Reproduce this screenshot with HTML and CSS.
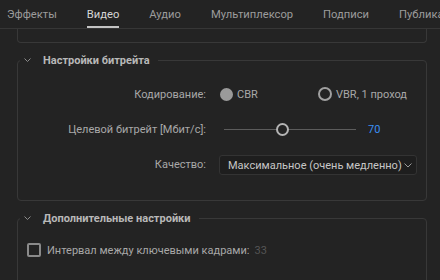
FILE: index.html
```html
<!DOCTYPE html>
<html lang="ru">
<head>
<meta charset="UTF-8">
<title>Экспорт — Видео</title>
<link rel="stylesheet" href="styles.css">
</head>
<body>

<!-- Tabs -->
<div class="tabs">
    <span class="tab">Эффекты</span>
    <span class="tab active">Видео</span>
    <span class="tab">Аудио</span>
    <span class="tab">Мультиплексор</span>
    <span class="tab">Подписи</span>
    <span class="tab">Публикация</span>
</div>

<div class="panel">
    <div class="group group-cut"></div>

    <!-- Bitrate settings -->
    <fieldset class="group">
        <legend>
            <svg class="chevron" width="7" height="4" viewBox="0 0 7 4"><path d="M0.5 0.5 L3.5 3.5 L6.5 0.5" fill="none" stroke="#8c8c8c" stroke-width="1"/></svg>
            Настройки битрейта
        </legend>
        <div class="form-grid">
            <label>Кодирование:</label>
            <div class="radios">
                <span class="radio-option"><span class="radio checked"></span>CBR</span>
                <span class="radio-option"><span class="radio"></span>VBR, 1 проход</span>
            </div>

            <label>Целевой битрейт [Мбит/с]:</label>
            <div class="slider-row">
                <div class="slider">
                    <span class="thumb"></span>
                </div>
                <span class="value">70</span>
            </div>

            <label>Качество:</label>
            <div class="select">
                <span>Максимальное (очень медленно)</span>
                <svg width="8" height="5" viewBox="0 0 8 5"><path d="M0.5 0.5 L4 4 L7.5 0.5" fill="none" stroke="#9a9a9a" stroke-width="1"/></svg>
            </div>
        </div>
    </fieldset>

    <!-- Advanced settings -->
    <fieldset class="group group-last">
        <legend>
            <svg class="chevron" width="7" height="4" viewBox="0 0 7 4"><path d="M0.5 0.5 L3.5 3.5 L6.5 0.5" fill="none" stroke="#8c8c8c" stroke-width="1"/></svg>
            Дополнительные настройки
        </legend>
        <div class="check-row">
            <span class="checkbox"></span>
            <span>Интервал между ключевыми кадрами:</span>
            <span class="muted">33</span>
        </div>
    </fieldset>
</div>

</body>
</html>
```

FILE: styles.css
```css
body {
    font-family: 'Roboto', 'Noto Sans', sans-serif;
    font-size: 11px;
    margin: 0;
    padding: 0;
    background-color: #232323;
    color: #a8a8a8;
    overflow: hidden;
}

/* Tabs */
.tabs {
    display: flex;
    gap: 30px;
    height: 28px;
    padding-left: 7px;
    border-bottom: 1px solid #363636;
    white-space: nowrap;
    overflow: hidden;
}

.tab {
    padding-top: 8px;
    padding-bottom: 3px;
    line-height: 14px;
    border-bottom: 2px solid transparent;
    color: #9c9c9c;
    font-size: 11.2px;
}

.tab.active {
    color: #d6d6d6;
    border-bottom-color: #c4c4c4;
}

/* Panel */
.panel {
    padding: 0 13px 0 17px;
}

.group {
    border: 1px solid #383838;
    border-radius: 4px;
    margin: 10px 0 0 0;
    padding: 0;
    min-width: 0;
}

.group-cut {
    height: 13px;
    border-top: none;
    border-radius: 0 0 4px 4px;
    margin-top: 0;
}

.group legend {
    display: flex;
    align-items: center;
    height: 14px;
    margin-left: 2px;
    padding: 0 8px 0 4px;
    font-weight: 700;
    color: #b8b8b8;
}

.chevron {
    margin-right: 12px;
}

/* Form rows */
.form-grid {
    display: grid;
    grid-template-columns: 188px 1fr;
    grid-template-rows: 20px 20px 21px;
    column-gap: 13px;
    row-gap: 15px;
    align-items: center;
    margin: 17px 0 25px 0;
}

.form-grid label {
    text-align: right;
}

.radios {
    display: flex;
    align-items: center;
    padding-left: 1px;
}

.radio-option {
    display: flex;
    align-items: center;
    gap: 4px;
    width: 98px;
}

.radio {
    width: 9px;
    height: 9px;
    border: 2px solid #a0a0a0;
    border-radius: 50%;
}

.radio.checked {
    background: #9a9a9a;
    border-color: #9a9a9a;
}

.radio-option + .radio-option .radio {
    width: 10px;
    height: 10px;
}

.slider-row {
    display: flex;
    align-items: center;
    gap: 12px;
    padding-left: 5px;
}

.slider {
    position: relative;
    width: 132px;
    height: 1px;
    background: #5c5c5c;
}

.thumb {
    position: absolute;
    left: 52px;
    top: -6px;
    width: 9px;
    height: 9px;
    border: 2px solid #b4b4b4;
    border-radius: 50%;
    background: #232323;
}

.value {
    color: #3a8ef2;
}

.select {
    display: flex;
    align-items: center;
    justify-content: space-between;
    width: 198px;
    height: 20px;
    box-sizing: border-box;
    margin-top: 1px;
    padding: 0 4px 0 8px;
    background: #1e1e1e;
    border: 1px solid #333;
    border-radius: 3px;
    color: #c6c6c6;
    white-space: nowrap;
}

/* Checkbox row */
.group-last {
    padding-bottom: 40px;
}

.check-row {
    display: flex;
    align-items: center;
    gap: 6px;
    margin-top: 18px;
    padding-left: 9px;
    height: 14px;
}

.checkbox {
    width: 10px;
    height: 10px;
    border: 2px solid #8a8a8a;
    border-radius: 2px;
}

.muted {
    color: #555;
    margin-left: -1px;
}
```
